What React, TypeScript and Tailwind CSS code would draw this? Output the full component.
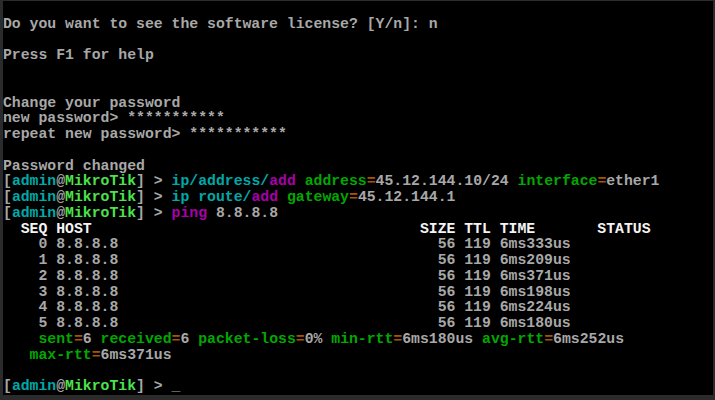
import React from "react";

type Seg = [string, string];

const G = "text-[#a8a8a8]";
const C = "text-[#00a8a8]";
const BG = "text-[#4ce24c]";
const GR = "text-[#00a800]";
const M = "text-[#a800a8]";
const BR = "text-[#a85400]";
const W = "text-[#f4f4f4]";

const prompt: Seg[] = [
  ["[", G],
  ["admin", C],
  ["@", G],
  ["MikroTik", BG],
  ["] > ", G],
];

const pad = (s: string, n: number) => s.padEnd(n, " ");

const pings: [string, string][] = [
  ["0", "6ms333us"],
  ["1", "6ms209us"],
  ["2", "6ms371us"],
  ["3", "6ms198us"],
  ["4", "6ms224us"],
  ["5", "6ms180us"],
];

const lines: Seg[][] = [
  [],
  [["Do you want to see the software license? [Y/n]: n", G]],
  [],
  [["Press F1 for help", G]],
  [],
  [],
  [["Change your password", G]],
  [["new password> ***********", G]],
  [["repeat new password> ***********", G]],
  [],
  [["Password changed", G]],
  [
    ...prompt,
    ["ip/address/", C],
    ["add", M],
    [" address", GR],
    ["=", BR],
    ["45.12.144.10/24", G],
    [" interface", GR],
    ["=", BR],
    ["ether1", G],
  ],
  [
    ...prompt,
    ["ip route/", C],
    ["add", M],
    [" gateway", GR],
    ["=", BR],
    ["45.12.144.1", G],
  ],
  [...prompt, ["ping", M], [" 8.8.8.8", G]],
  [[pad(pad("  SEQ HOST", 47) + "SIZE TTL TIME", 67) + "STATUS", W]],
  ...pings.map(
    ([n, t]): Seg[] => [[pad("    " + n + " 8.8.8.8", 49) + "56 119 " + t, G]]
  ),
  [
    ["    sent", GR],
    ["=", BR],
    ["6", G],
    [" received", GR],
    ["=", BR],
    ["6", G],
    [" packet-loss", GR],
    ["=", BR],
    ["0%", G],
    [" min-rtt", GR],
    ["=", BR],
    ["6ms180us", G],
    [" avg-rtt", GR],
    ["=", BR],
    ["6ms252us", G],
  ],
  [
    ["   max-rtt", GR],
    ["=", BR],
    ["6ms371us", G],
  ],
  [],
  [...prompt, ["_", G]],
];

export default function App() {
  return (
    <div className="w-[715px] h-[400px] bg-[#2b2b2b] pt-[1px] pl-[3px] pr-[2px] pb-[5px] overflow-hidden">
      <div
        className="w-full h-full bg-black overflow-hidden text-[14.79px] leading-[15.76px] whitespace-pre font-bold"
        style={{ fontFamily: '"Liberation Mono", "DejaVu Sans Mono", monospace' }}
      >
        {lines.map((segs, i) => (
          <div key={i} className="h-[15.76px]">
            {segs.map(([t, c], j) => (
              <span key={j} className={c}>
                {t}
              </span>
            ))}
          </div>
        ))}
      </div>
    </div>
  );
}
